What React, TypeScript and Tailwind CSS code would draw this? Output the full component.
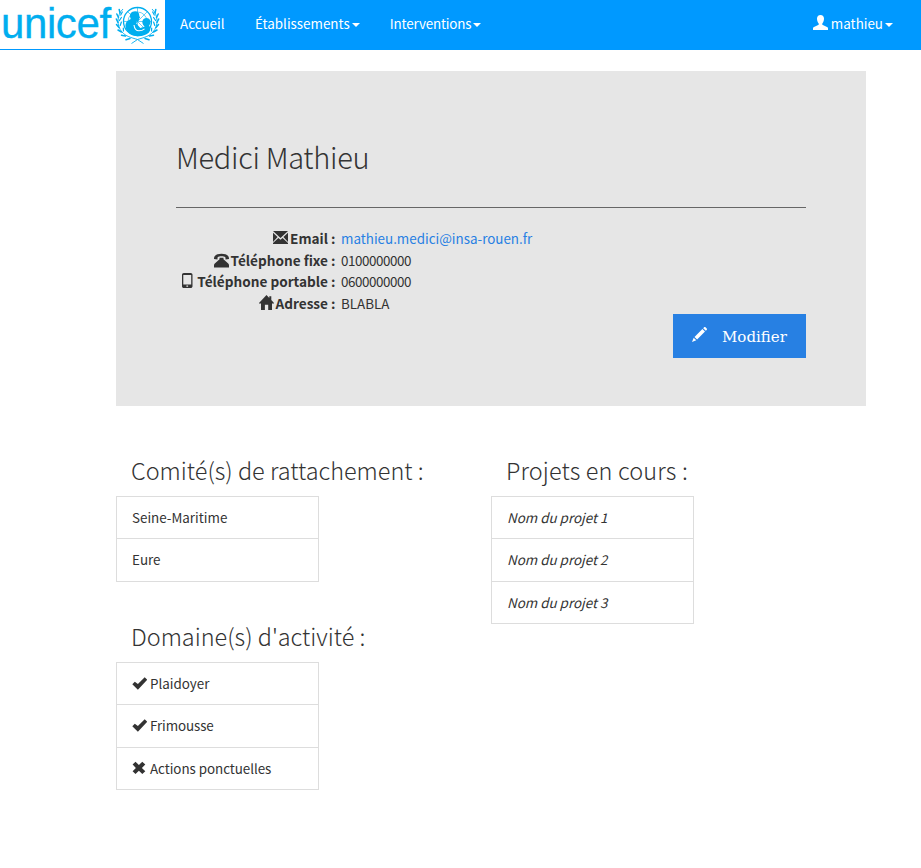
import React from "react";

const SANS = "font-['Noto_Sans_CJK_SC','Liberation_Sans',sans-serif]";

type IconProps = { className?: string; children: React.ReactNode };
function Glyph({ className = "", children }: IconProps) {
  return (
    <svg viewBox="0 0 15 15" width="15" height="15" fill="currentColor" className={`shrink-0 ${className}`}>
      {children}
    </svg>
  );
}

const UserIcon = () => (
  <Glyph className="-mt-[3px]">
    <path d="M7.5 0C5.3 0 4 1.5 4 3.6c0 2 .6 3.8 1.7 4.9v1.3L1 11.9c-.7.3-1 .8-1 1.4V15h15v-1.7c0-.6-.3-1.1-1-1.4L9.3 9.8V8.500C10.400 7.400 11 5.600 11 3.600 11 1.500 9.700 0 7.500 0z" />
  </Glyph>
);
const MailIcon = () => (
  <Glyph className="mt-[2px]">
    <path d="M0 1h15L7.500 8zM0 2.800l4.600 4.300L0 12zM15 2.800l-4.600 4.300L15 12zM5.400 7.900l2.100 1.900 2.100-1.900L15 13v1H0v-1z" />
  </Glyph>
);
const PhoneIcon = () => (
  <Glyph className="mt-[3px]">
    <path d="M0 5.300C0 2.600 3 .8 7.500.8S15 2.600 15 5.300v.7l-3.500.6V4.400C10.500 3.600 9 3.300 7.500 3.300s-3 .3-4 1.100v2.200L0 6z" />
    <path d="M5.500 4.800h4v1.400l4.700 4.300c.5.400.8 1 .8 1.700V14.500H0v-2.300c0-.7.300-1.300.8-1.700l4.700-4.300z" />
  </Glyph>
);
const MobileIcon = () => (
  <Glyph className="mt-[2px]">
    <path fillRule="evenodd" d="M3.800 0h6.900c1 0 1.800.8 1.800 1.800v11.400c0 1-.8 1.800-1.800 1.800H3.800c-1 0-1.800-.8-1.800-1.800V1.800C2 .8 2.800 0 3.800 0zM3.300 2v9.500h7.900V2zM6.400 12.500v1.300h1.700v-1.300z" />
  </Glyph>
);
const HomeIcon = () => (
  <Glyph className="mt-[2px]">
    <path d="M7.500 0l2.800 2.900V1.300h2v3.600L15 8v.6h-2V15H9.200V9.800H5.900V15H2V8.600H0V8z" />
  </Glyph>
);
const PencilIcon = () => (
  <Glyph>
    <path d="M11.200 1.200l.9-.9c.4-.4 1-.4 1.400 0l1.200 1.200c.4.400.4 1 0 1.400l-.9.900zM10.400 2L13 4.600l-7.900 7.900-2.600-2.600zM1.700 10.700l2.600 2.600L0 15z" />
  </Glyph>
);
const CheckIcon = () => (
  <Glyph className="mt-[3px]">
    <path d="M.3 8.300l2.500-2.500 3.100 2.200L12.700 1.300 15.200 3.800 5.900 13.700z" />
  </Glyph>
);
const CrossIcon = () => (
  <Glyph className="mt-[3px]">
    <path d="M3.500.7L6.900 4 10.300.7l3 2.900L9.900 6.900l3.400 3.300-3 2.900L6.900 9.800l-3.400 3.300L.6 10.200l3.300-3.300L.6 3.600z" />
  </Glyph>
);

function Caret() {
  return <span className="mt-[3px] ml-[2px] h-0 w-0 border-x-4 border-t-4 border-x-transparent border-t-white" />;
}

function Emblem() {
  return (
    <svg width="46" height="42" viewBox="0 0 46 42" fill="none" stroke="#00aeef" className="shrink-0">
      <circle cx="22.500" cy="16.500" r="14" strokeWidth="1.300" />
      <circle cx="22.500" cy="16.500" r="9.500" strokeWidth=".6" />
      <path d="M8.500 16.500h28M22.500 2.500v28M12.600 6.600l19.800 19.800M32.400 6.600L12.600 26.400" strokeWidth=".6" />
      <g fill="#00aeef" stroke="none">
        <path d="M15.500 8.500c2-3 7-3.200 8.300-.3.600 1.400.2 2.300.9 3.500l.4 1.300-1 .5c.1 2-.6 2.700-2.400 2.500l-.4 2.500 4 4.500 4.500-1.500c-2.800-1.800-3.300-5.500-1.100-7.400 2.300-2 6-.9 6.700 2 .4 1.800-.2 3.300-1.300 4.300 1.800 2.100 1.600 5.200-.4 7.400-3 2.500-7 3.700-11.500 3.400-6.500-.6-11-4.500-11.700-9.700-.3-3.300 1.300-5.900 5.300-7.500-.9-1.800-1.100-3.800-.3-5.500z" />
      </g>
      <path d="M19 20c.5 3.800 2.300 5.800 5 5.800 2.400 0 4-.7 5.500-2" stroke="white" strokeWidth="1.100" />
      <g strokeWidth=".9">
        <path d="M8 4C1.500 10 1.500 21 7 27c4 4.500 9 5.500 15.500 7.500l6 4" />
        <path d="M37 4c6.500 6 6.500 17 1 23-4 4.500-9 5.500-15.500 7.500l-6 4" />
      </g>
      <g strokeWidth="1.500" strokeLinecap="round">
        <path d="M5 8L4.200 4.500M3.500 12.500L1.800 9M3 17.500L1.300 14M4 22.500L1.500 19.500M6.500 27L3 25M10.500 31l-4-.8M15 33.500l-4 1.300" />
        <path d="M40 8l.8-3.500M41.500 12.500L43.200 9M42 17.500l1.700-3.500M41 22.500l2.500-3M38.500 27l3.500-2M34.500 31l4-.8M30 33.500l4 1.300" />
        <path d="M5.700 10l1.600-3M4.400 15.500l2-3M5.200 20.500l1.200-3.500M8.500 26l-.2-3M39.300 10l-1.600-3M40.600 15.500l-2-3M39.800 20.500l-1.200-3.500M36.500 26l.2-3" strokeWidth="1.200" />
      </g>
    </svg>
  );
}

function Logo() {
  return (
    <a className="flex h-[49px] w-[165px] shrink-0 overflow-hidden bg-white">
      <span className="ml-[1px] w-[114px] font-['Liberation_Sans',Arial,sans-serif] text-[42px] leading-[47px] tracking-[-0.400px] text-[#00aeef] [-webkit-text-stroke:0.3px_#00aeef]">
        unicef
      </span>
      <span className="mt-[5px]">
        <Emblem />
      </span>
    </a>
  );
}

function Row({ icon, label, children }: { icon: React.ReactNode; label: string; children: React.ReactNode }) {
  return (
    <div className="flex h-[21.430px]">
      <dt className="flex w-[159.500px] items-start justify-end gap-[2px] text-[13.600px] font-bold">
        {icon}
        <span>{label}</span>
      </dt>
      <dd className="ml-[5.500px]">{children}</dd>
    </div>
  );
}

function List({ items }: { items: React.ReactNode[] }) {
  return (
    <ul className="w-[203px]">
      {items.map((item, i) => (
        <li key={i} className="-mb-px flex h-[43.430px] gap-[3px] border border-[#dddddd] bg-white px-[15px] py-[10px]">
          {item}
        </li>
      ))}
    </ul>
  );
}

function Title({ children, className = "" }: { children: React.ReactNode; className?: string }) {
  return (
    <h3 className={`mb-[13px] pl-[15px] text-[23.450px] leading-[26px] font-light whitespace-nowrap ${className}`}>
      {children}
    </h3>
  );
}

export default function App() {
  return (
    <div className={`min-h-[868px] w-[921px] bg-white text-[13.400px] leading-[21.430px] text-[#333333] ${SANS}`}>
      <nav className="flex h-[50px] items-start border-b border-[#0099ff] bg-[#0099ff] text-white">
        <Logo />
        <div className="flex h-[47px] flex-1 items-center pr-[28px] pl-[15px]">
          <a>Accueil</a>
          <a className="ml-[30.500px] flex items-center">Établissements<Caret /></a>
          <a className="ml-[30px] flex items-center tracking-[-0.150px]">Interventions<Caret /></a>
          <a className="ml-auto flex items-center"><UserIcon /><span className="ml-[3px]">mathieu</span><Caret /></a>
        </div>
      </nav>

      <main className="ml-[116px] w-[750px] pt-[21px]">
        <section className="h-[335px] bg-[#e6e6e6] px-[60px] pt-[66px]">
          <h2 className="h-[70px] text-[29px] leading-[38px] font-light tracking-[-0.300px]">Medici Mathieu</h2>
          <hr className="mb-[20px] border-t border-[#666666]" />
          <dl className="h-[86px] pt-[0.300px]">
            <Row icon={<MailIcon />} label="Email :"><a className="text-[#2780e3]">mathieu.medici@insa-rouen.fr</a></Row>
            <Row icon={<PhoneIcon />} label="Téléphone fixe :"><span className="tracking-[-0.430px]">0100000000</span></Row>
            <Row icon={<MobileIcon />} label="Téléphone portable :"><span className="tracking-[-0.430px]">0600000000</span></Row>
            <Row icon={<HomeIcon />} label="Adresse :">BLABLA</Row>
          </dl>
          <button className="ml-auto flex h-[44px] w-[133px] gap-[15px] bg-[#2780e3] pt-[13px] pl-[19px] font-['DejaVu_Serif',serif] text-[15px] leading-[21px] text-white">
            <PencilIcon />
            <span>Modifier</span>
          </button>
        </section>

        <div className="flex pt-[51px]">
          <div className="w-[375px]">
            <Title>Comité(s) de rattachement :</Title>
            <List items={["Seine-Maritime", "Eure"]} />
            <div className="h-[41.900px]" />
            <Title>Domaine(s) d'activité :</Title>
            <List
              items={[
                <><CheckIcon /><span>Plaidoyer</span></>,
                <><CheckIcon /><span className="tracking-[-0.100px]">Frimousse</span></>,
                <><CrossIcon /><span className="tracking-[-0.050px]">Actions ponctuelles</span></>,
              ]}
            />
          </div>
          <div className="w-[375px]">
            <Title className="tracking-[0.150px]">Projets en cours :</Title>
            <List items={[<em>Nom du projet 1</em>, <em>Nom du projet 2</em>, <em>Nom du projet 3</em>]} />
          </div>
        </div>
      </main>
    </div>
  );
}
